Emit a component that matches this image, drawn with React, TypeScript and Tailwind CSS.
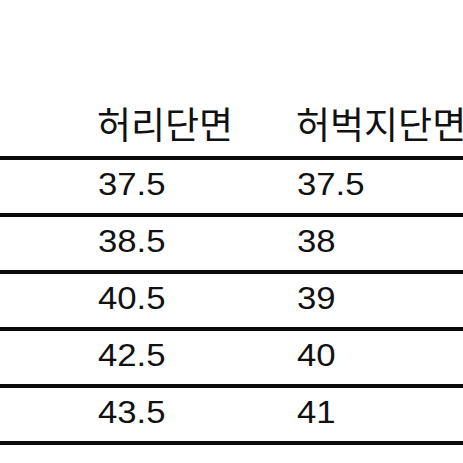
import React from "react";

const rows: [string, string][] = [
  ["37.5", "37.5"],
  ["38.5", "38"],
  ["40.5", "39"],
  ["42.5", "40"],
  ["43.5", "41"],
];

export default function App() {
  return (
    <div
      className="w-[463px] h-[463px] bg-white overflow-hidden text-[#111]"
      style={{ fontFamily: '"Liberation Sans", "Noto Sans CJK KR", sans-serif' }}
    >
      <div className="h-[160px] border-b-4 border-[#0a0a0a] grid grid-cols-[97px_199px_1fr] items-end pb-[11px]">
        <div />
        <div className="text-[37px] leading-none whitespace-nowrap">허리단면</div>
        <div className="text-[37px] leading-none whitespace-nowrap">허벅지단면</div>
      </div>
      {rows.map(([a, b]) => (
        <div
          key={a}
          className="h-[57px] border-b-4 border-[#0a0a0a] grid grid-cols-[98px_199px_1fr] items-center pb-[5px]"
        >
          <div />
          <div className="text-[31px] leading-none origin-left scale-x-[1.12]">{a}</div>
          <div className="text-[31px] leading-none origin-left scale-x-[1.12]">{b}</div>
        </div>
      ))}
    </div>
  );
}
